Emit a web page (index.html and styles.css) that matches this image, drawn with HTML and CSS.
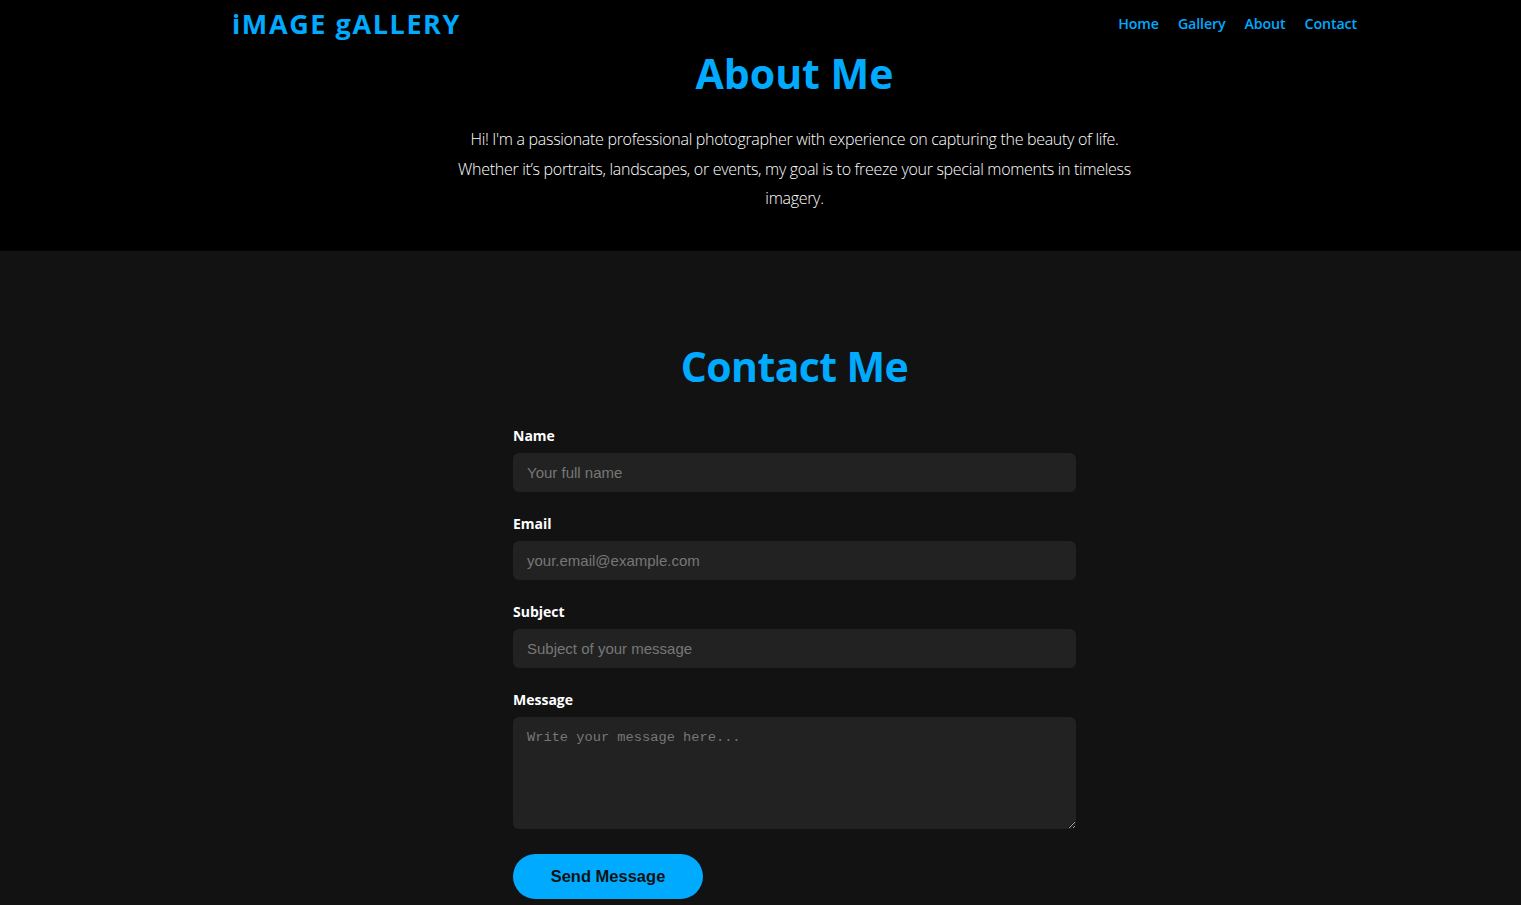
FILE: index.html
```html
<!DOCTYPE html>
<html lang="en">
<head>
<meta charset="utf-8">
<title>Image Gallery</title>
<link rel="stylesheet" href="styles.css">
</head>
<body>
<section class="top">
  <header class="header">
    <div class="logo">iMAGE gALLERY</div>
    <nav class="nav">
      <a href="#">Home</a>
      <a href="#">Gallery</a>
      <a href="#">About</a>
      <a href="#">Contact</a>
    </nav>
  </header>
  <div class="about">
    <h1 class="title">About Me</h1>
    <p class="about-text">Hi! I'm a passionate professional photographer with experience on capturing the beauty of life. Whether it’s portraits, landscapes, or events, my goal is to freeze your special moments in timeless imagery.</p>
  </div>
</section>
<section class="contact">
  <h2 class="title">Contact Me</h2>
  <form class="form">
    <div class="field">
      <label for="name">Name</label>
      <input id="name" type="text" placeholder="Your full name">
    </div>
    <div class="field">
      <label for="email">Email</label>
      <input id="email" type="email" placeholder="your.email@example.com">
    </div>
    <div class="field">
      <label for="subject">Subject</label>
      <input id="subject" type="text" placeholder="Subject of your message">
    </div>
    <div class="field">
      <label for="message">Message</label>
      <textarea id="message" placeholder="Write your message here..."></textarea>
    </div>
    <button type="button" class="send">Send Message</button>
  </form>
</section>
</body>
</html>
```
FILE: styles.css
```css
* { box-sizing: border-box; }
html, body { margin: 0; padding: 0; }
body {
  background: #121212;
  color: #fff;
  font-family: "Open Sans", "Noto Sans", sans-serif;
  overflow: hidden;
}
.top {
  background: #000;
  padding-left: 68px;
  height: 251px;
}
.header {
  width: 1125px;
  margin: 0 auto;
  display: flex;
  justify-content: space-between;
  align-items: center;
  padding-top: 5px;
}
.logo {
  color: #00aaff;
  font-size: 27px;
  font-weight: 700;
  letter-spacing: 1.6px;
  line-height: 38px;
}
.nav {
  display: flex;
  gap: 19px;
  margin-top: -2px;
}
.nav a {
  color: #00aaff;
  text-decoration: none;
  font-size: 14.2px;
  font-weight: 600;
  letter-spacing: -0.1px;
}
.about {
  text-align: center;
}
.title {
  color: #00aaff;
  font-size: 41px;
  font-weight: 700;
  margin: 0;
  line-height: 54px;
}
.about .title { margin-top: 3px; }
.about-text {
  max-width: 690px;
  margin: 25px auto 0;
  font-size: 16px;
  font-weight: 300;
  line-height: 29.5px;
  letter-spacing: -0.3px;
}
.contact {
  padding-left: 68px;
  padding-top: 88px;
  text-align: center;
}
.contact .title { letter-spacing: -0.6px; }
.form {
  width: 563px;
  margin: 33px auto 0;
  text-align: left;
}
.field {
  display: flex;
  flex-direction: column;
  margin-bottom: 22px;
}
.field label {
  font-size: 14px;
  font-weight: 700;
  line-height: 20px;
  margin-bottom: 7px;
  color: #fff;
}
.field input, .field textarea {
  background: #222;
  border: none;
  border-radius: 6px;
  color: #fff;
  outline: none;
}
.field input {
  height: 39px;
  padding: 0 14px;
  font-family: "Liberation Sans", Arial, sans-serif;
  font-size: 15px;
}
.field textarea {
  height: 112px;
  padding: 13px 14px;
  font-family: "Liberation Mono", monospace;
  font-size: 13.7px;
  resize: vertical;
}
.field input::placeholder, .field textarea::placeholder {
  color: #777;
}
.send {
  margin-top: 3px;
  width: 190px;
  height: 45px;
  border: none;
  border-radius: 23px;
  background: #00aaff;
  color: #111;
  font-family: "Liberation Sans", Arial, sans-serif;
  font-weight: 700;
  font-size: 16.5px;
}
```
